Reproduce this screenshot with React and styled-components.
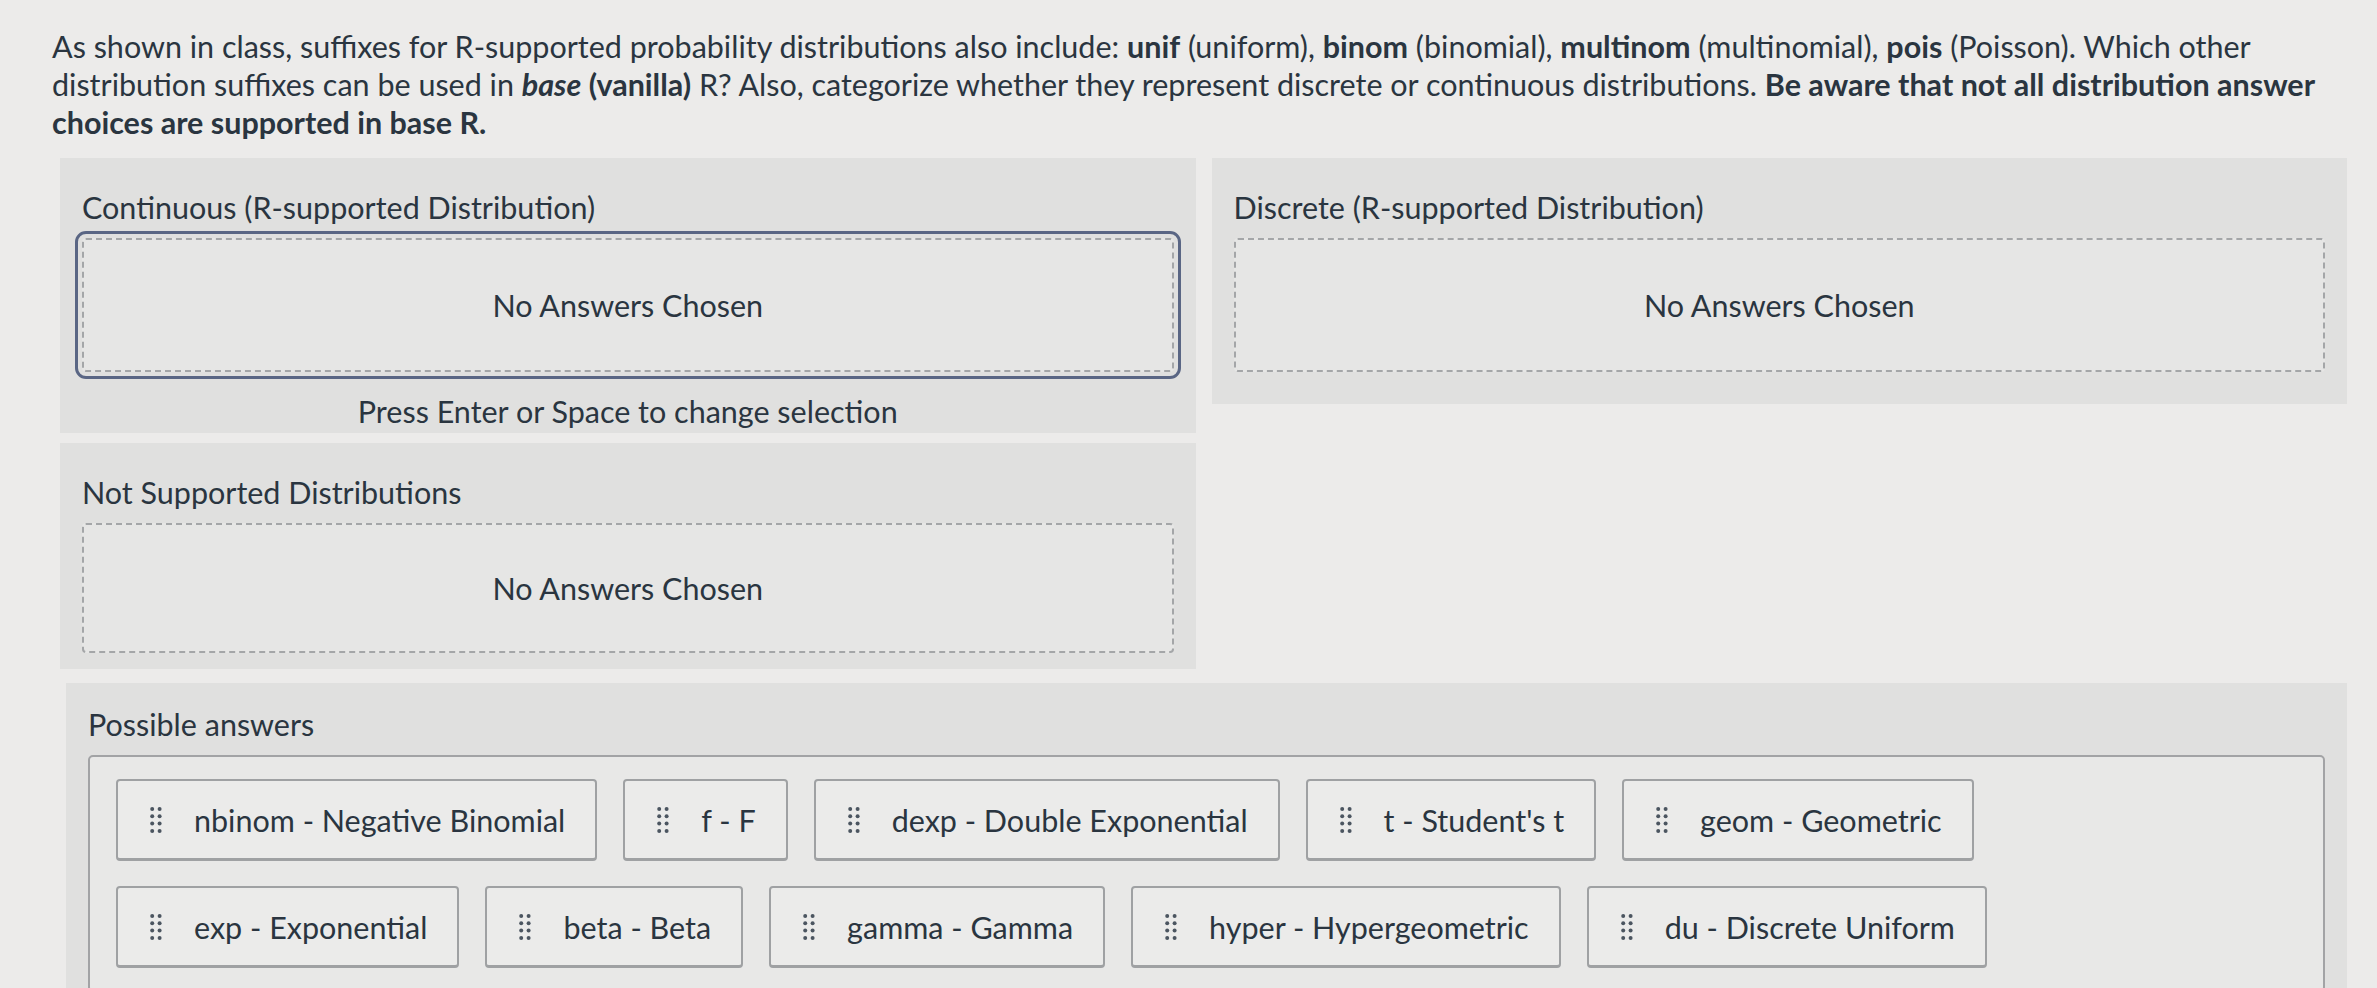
import React from "react";
import styled, { createGlobalStyle } from "styled-components";

const Global = createGlobalStyle`
  html, body { margin: 0; padding: 0; }
  body {
    background: #ecebea;
    font-family: Lato, "Open Sans", "Liberation Sans", sans-serif;
    color: #2a3540;
  }
`;

const FS = 30.5;

const Page = styled.div`
  padding: 27px 30px 0 52px;
  box-sizing: border-box;
  width: 2377px;
  height: 988px;
  overflow: hidden;
`;

const Question = styled.div`
  font-size: ${FS}px;
  line-height: 38px;
`;

const QLine = styled.div`
  white-space: nowrap;
`;

const Strong = styled.span`
  font-weight: 700;
  font-style: ${(p) => (p.$italic ? "italic" : "normal")};
`;

const Board = styled.div`
  margin: 17px 0 0 8px;
  display: grid;
  grid-template-columns: 1fr 1fr;
  column-gap: 16px;
  align-items: start;
`;

const Column = styled.div`
  display: flex;
  flex-direction: column;
  gap: 10px;
`;

const Panel = styled.section`
  background: #e0e0df;
  padding: 30px 22px ${(p) => (p.$pb ?? 32)}px;
  display: flex;
  flex-direction: column;
`;

const Label = styled.div`
  font-size: ${FS}px;
  line-height: 38px;
`;

const Drop = styled.div`
  margin-top: 12px;
  height: ${(p) => p.$h || 134}px;
  box-sizing: border-box;
  border: 2px dashed #a4a6a8;
  border-radius: 4px;
  display: flex;
  align-items: center;
  justify-content: center;
  font-size: ${FS}px;
  background: #e6e6e5;
  outline: ${(p) => (p.$focus ? "3px solid #5a6684" : "none")};
  outline-offset: 4px;
`;

const Hint = styled.div`
  margin-top: 20px;
  text-align: center;
  font-size: ${FS}px;
  line-height: 38px;
`;

const Answers = styled(Panel)`
  margin: 14px 0 0 14px;
  padding-top: 22px;
  padding-bottom: 22px;
`;

const Pool = styled.div`
  margin-top: 12px;
  border: 2px solid #a2a3a5;
  border-radius: 5px;
  background: #e8e8e7;
  padding: 22px 26px;
  display: flex;
  flex-direction: column;
  gap: 25px;
`;

const ChipRow = styled.div`
  display: flex;
  gap: 26px;
`;

const Chip = styled.div`
  height: 82px;
  box-sizing: border-box;
  display: flex;
  align-items: center;
  gap: 32px;
  padding: 0 30px 0 32px;
  border: 2px solid #9fa1a3;
  border-bottom-width: 3px;
  border-radius: 4px;
  background: #ebebea;
  font-size: ${FS}px;
  white-space: nowrap;
`;

const Grip = () => (
  <svg width="12" height="28" viewBox="0 0 12 28" fill="#4b5560">
    {[3, 10.3, 17.6, 25].map((y) =>
      [2.2, 9.6].map((x) => <circle key={`${x}-${y}`} cx={x} cy={y} r="2" />)
    )}
  </svg>
);

const rows = [
  [
    "nbinom - Negative Binomial",
    "f - F",
    "dexp - Double Exponential",
    "t - Student's t",
    "geom - Geometric",
  ],
  [
    "exp - Exponential",
    "beta - Beta",
    "gamma - Gamma",
    "hyper - Hypergeometric",
    "du - Discrete Uniform",
  ],
];

export default function App() {
  return (
    <>
      <Global />
      <Page>
        <Question>
          <QLine>
            As shown in class, suffixes for R-supported probability distributions also include: <Strong>unif</Strong>{" "}
            (uniform), <Strong>binom</Strong> (binomial), <Strong>multinom</Strong> (multinomial),{" "}
            <Strong>pois</Strong> (Poisson). Which other
          </QLine>
          <QLine>
            distribution suffixes can be used in <Strong $italic>base</Strong>
            <Strong> (vanilla)</Strong> R? Also, categorize whether they represent discrete or continuous
            distributions. <Strong>Be aware that not all distribution answer</Strong>
          </QLine>
          <QLine>
            <Strong>choices are supported in base R.</Strong>
          </QLine>
        </Question>
        <Board>
          <Column>
            <Panel $pb={3}>
              <Label>Continuous (R-supported Distribution)</Label>
              <Drop $focus>No Answers Chosen</Drop>
              <Hint>Press Enter or Space to change selection</Hint>
            </Panel>
            <Panel $pb={16}>
              <Label>Not Supported Distributions</Label>
              <Drop $h={130}>No Answers Chosen</Drop>
            </Panel>
          </Column>
          <Column>
            <Panel>
              <Label>Discrete (R-supported Distribution)</Label>
              <Drop>No Answers Chosen</Drop>
            </Panel>
          </Column>
        </Board>
        <Answers>
          <Label>Possible answers</Label>
          <Pool>
            {rows.map((row, i) => (
              <ChipRow key={i}>
                {row.map((t) => (
                  <Chip key={t}>
                    <Grip />
                    {t}
                  </Chip>
                ))}
              </ChipRow>
            ))}
          </Pool>
        </Answers>
      </Page>
    </>
  );
}
